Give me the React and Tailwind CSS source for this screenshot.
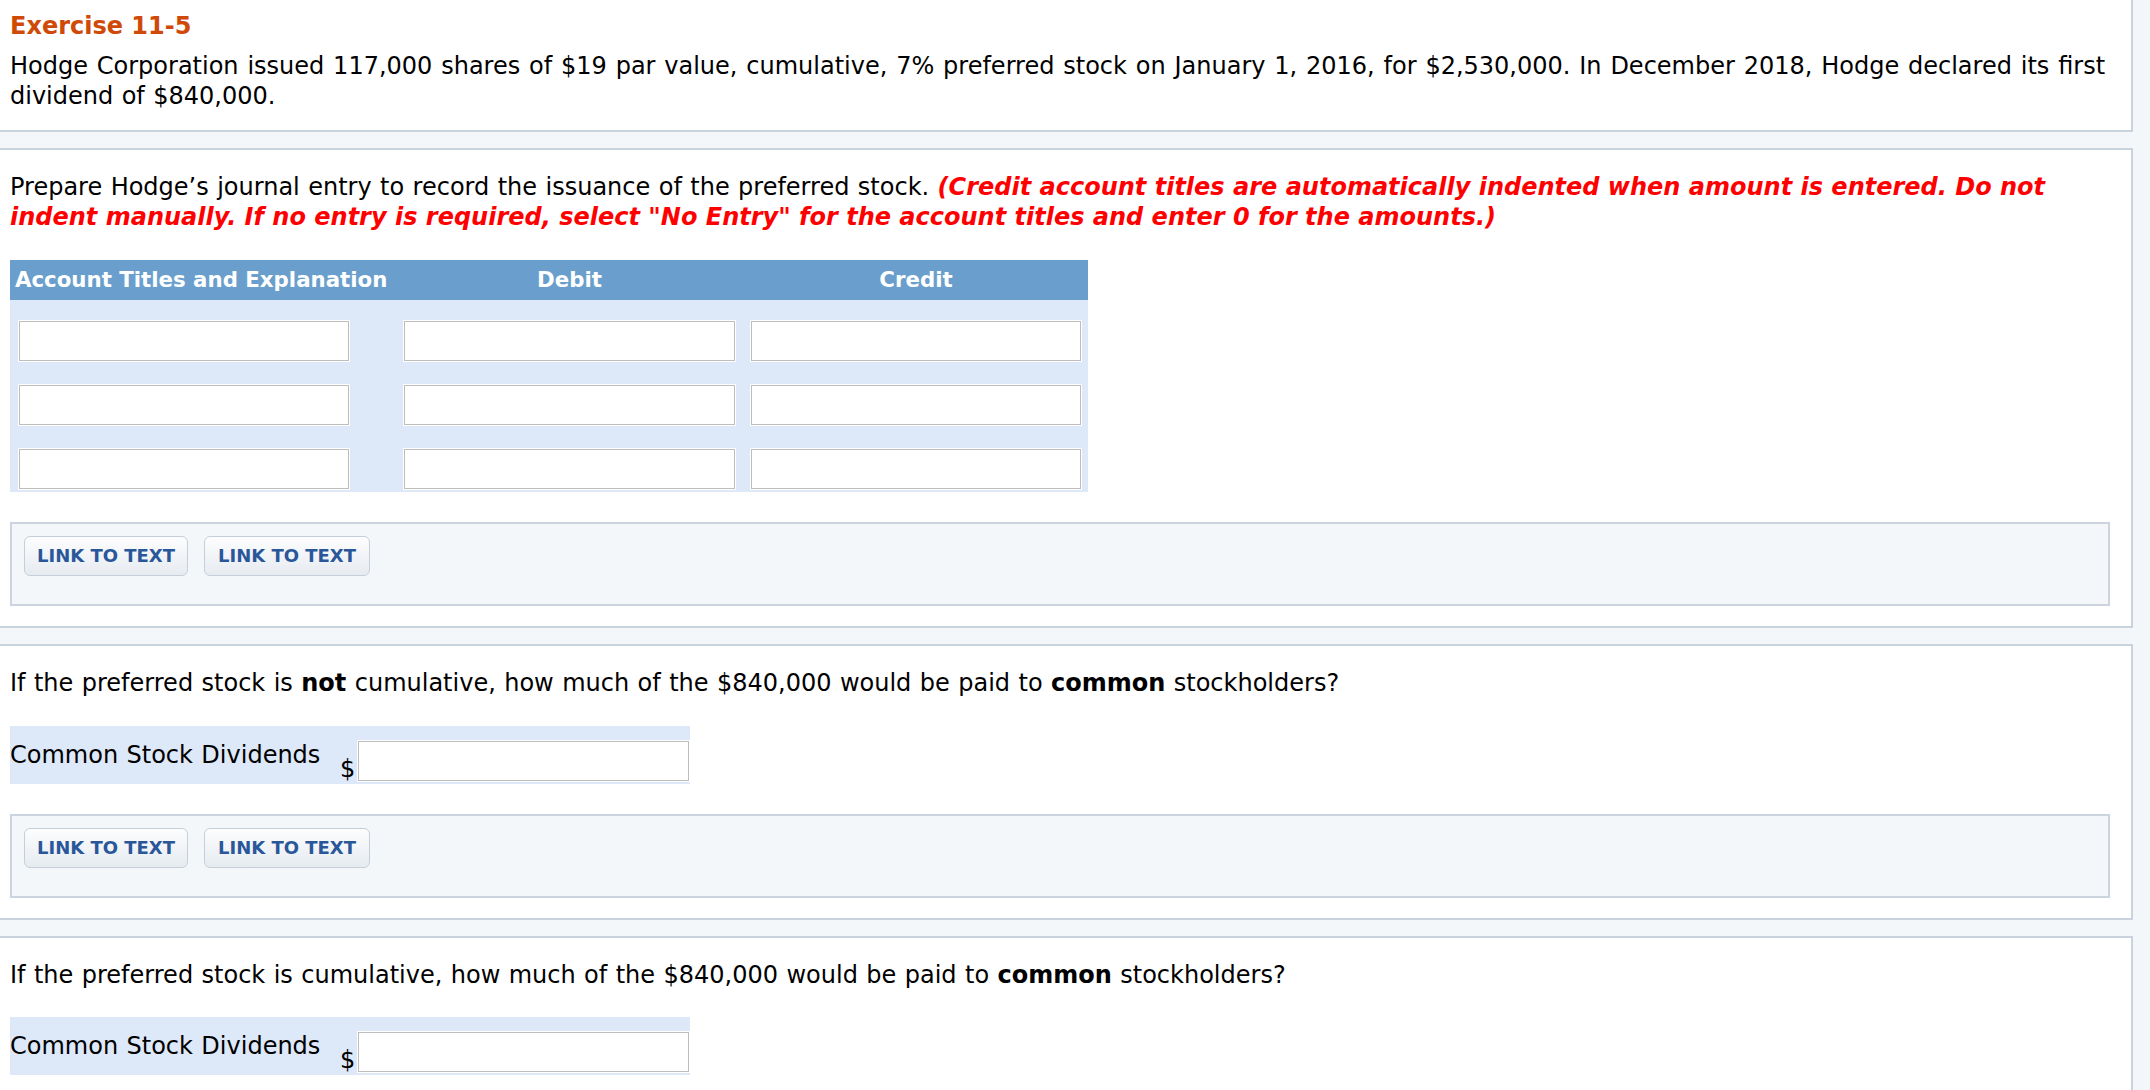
import React from "react";

function Field({ className = "" }) {
  return (
    <div
      className={
        "h-[40px] bg-white border border-[#bdbdbd] shadow-[0_0_0_1px_#ffffff] " +
        className
      }
    />
  );
}

function LinkButtons() {
  return (
    <div className="mt-[30px] w-[2100px] h-[84px] border-2 border-[#cbd4df] bg-[#f4f7fa] pl-[12px] pt-[12px] flex gap-[16px]">
      <button className="h-[40px] w-[164px] rounded-[6px] border border-[#c6cfd9] bg-linear-to-b from-[#fdfdfe] to-[#e6ebf0] text-[18px] font-bold text-[#29579a] leading-none [word-spacing:0px]">
        LINK TO TEXT
      </button>
      <button className="h-[40px] w-[166px] rounded-[6px] border border-[#c6cfd9] bg-linear-to-b from-[#fdfdfe] to-[#e6ebf0] text-[18px] font-bold text-[#29579a] leading-none [word-spacing:0px]">
        LINK TO TEXT
      </button>
    </div>
  );
}

function DividendRow() {
  return (
    <div className="mt-[27.5px] w-[680px] h-[58px] bg-[#dde8f8] flex">
      <div className="w-[330px] self-center whitespace-nowrap">
        Common Stock Dividends
      </div>
      <div className="w-[18px] self-end">$</div>
      <Field className="w-[331px] mt-[15px]" />
    </div>
  );
}

export default function App() {
  const section =
    "bg-white border-r-2 border-y-2 border-[#c9d3df] pl-[10px] pr-[10px]";
  return (
    <div className="h-[1090px] w-[2150px] overflow-hidden bg-[#f4f7fa] font-['DejaVu_Sans',sans-serif] text-[24px] leading-[30px] text-black [word-spacing:0.8px]">
      <div className="w-[2133px] flex flex-col gap-[16px]">
        {/* Section 1 */}
        <div className="bg-white border-r-2 border-b-2 border-[#c9d3df] pl-[10px] pr-[10px] pt-[11px] pb-[19px]">
          <div className="text-[24px] font-bold leading-[30px] text-[#cf4a08] [word-spacing:0px]">
            Exercise 11-5
          </div>
          <div className="mt-[10px]">
            <div className="whitespace-nowrap [word-spacing:1.2px]">
              Hodge Corporation issued 117,000 shares of $19 par value,
              cumulative, 7% preferred stock on January 1, 2016, for
              $2,530,000. In December 2018, Hodge declared its first
            </div>
            <div className="whitespace-nowrap">dividend of $840,000.</div>
          </div>
        </div>

        {/* Section 2 */}
        <div className={section + " pt-[22px] pb-[20px]"}>
          <div className="whitespace-nowrap">
            Prepare Hodge’s journal entry to record the issuance of the
            preferred stock.{" "}
            <span className="font-bold italic text-[#ff0000] [word-spacing:0px]">
              (Credit account titles are automatically indented when amount is
              entered. Do not
            </span>
          </div>
          <div className="whitespace-nowrap font-bold italic text-[#ff0000] [word-spacing:0px]">
            indent manually. If no entry is required, select "No Entry" for the
            account titles and enter 0 for the amounts.)
          </div>

          <div className="mt-[28px] w-[1078px]">
            <div className="h-[40px] bg-[#6a9fcd] flex items-center text-white text-[21.3px] font-bold [word-spacing:0px]">
              <div className="w-[394px] pl-[5px] whitespace-nowrap">
                Account Titles and Explanation
              </div>
              <div className="w-[331px] text-center">Debit</div>
              <div className="w-[16px]" />
              <div className="w-[330px] text-center">Credit</div>
            </div>
            {[0, 1, 2].map((i) => (
              <div
                key={i}
                className="h-[64px] bg-[#dde8f8] flex pl-[9px] pt-[21px]"
              >
                <Field className="w-[330px]" />
                <Field className="w-[331px] ml-[55px]" />
                <Field className="w-[330px] ml-[16px]" />
              </div>
            ))}
          </div>

          <LinkButtons />
        </div>

        {/* Section 3 */}
        <div className={section + " pt-[22px] pb-[20px]"}>
          <div className="whitespace-nowrap">
            If the preferred stock is <span className="font-bold">not</span>{" "}
            cumulative, how much of the $840,000 would be paid to{" "}
            <span className="font-bold">common</span> stockholders?
          </div>
          <DividendRow />
          <LinkButtons />
        </div>

        {/* Section 4 */}
        <div className={section + " pt-[22px] pb-[20px]"}>
          <div className="whitespace-nowrap">
            If the preferred stock is cumulative, how much of the $840,000
            would be paid to <span className="font-bold">common</span>{" "}
            stockholders?
          </div>
          <DividendRow />
        </div>
      </div>
    </div>
  );
}
